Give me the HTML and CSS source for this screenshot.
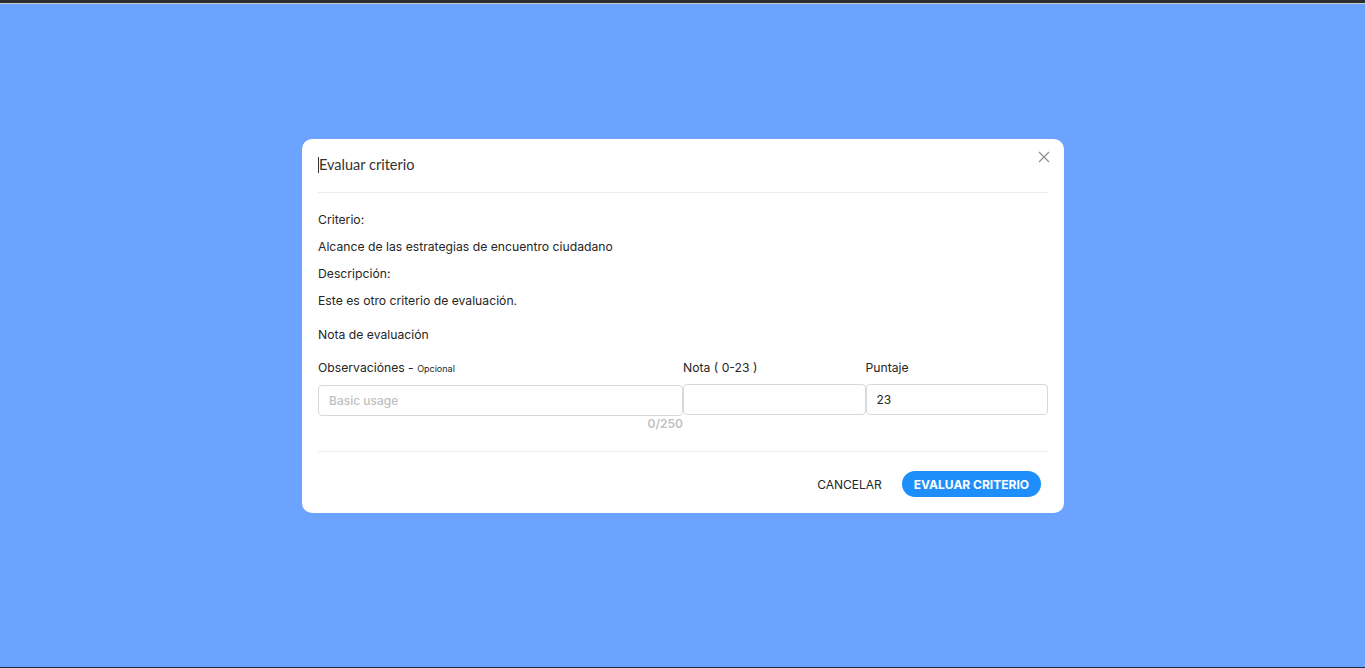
FILE: index.html
```html
<!DOCTYPE html>
<html lang="es">
<head>
<meta charset="utf-8">
<title>Evaluar criterio</title>
<link rel="stylesheet" href="styles.css">
</head>
<body>
<div class="topbar"></div>
<main class="stage">
  <section class="modal">
    <header class="modal-header">
      <h2 class="modal-title">Evaluar criterio</h2>
      <button class="close" aria-label="Cerrar">
        <svg width="12" height="12" viewBox="0 0 12 12"><path d="M1 1L11 11M11 1L1 11" stroke="#8c8c8c" stroke-width="1.2" fill="none"/></svg>
      </button>
    </header>
    <div class="modal-body">
      <p class="line">Criterio:</p>
      <p class="line">Alcance de las estrategias de encuentro ciudadano</p>
      <p class="line">Descripción:</p>
      <p class="line">Este es otro criterio de evaluación.</p>
      <p class="line section">Nota de evaluación</p>
      <div class="fields">
        <div class="field">
          <label class="label">Observaciónes - <small>Opcional</small></label>
          <input class="input" placeholder="Basic usage">
          <span class="count">0/250</span>
        </div>
        <div class="field">
          <label class="label">Nota ( 0-23 )</label>
          <input class="input">
        </div>
        <div class="field">
          <label class="label">Puntaje</label>
          <input class="input" value="23">
        </div>
      </div>
    </div>
    <footer class="modal-footer">
      <button class="btn btn-text">CANCELAR</button>
      <button class="btn btn-primary">EVALUAR CRITERIO</button>
    </footer>
  </section>
</main>
<div class="bottombar"></div>
</body>
</html>
```
FILE: styles.css
```css
* { box-sizing: border-box; }
html, body { margin: 0; height: 100%; }
body {
  background: #6ca3fe;
  font-family: Inter, "Noto Sans", sans-serif;
  color: #262626;
  display: flex;
  flex-direction: column;
  overflow: hidden;
}
.topbar {
  height: 4px;
  background: #2d2d2d;
  border-bottom: 1px solid #c9cbd0;
  flex: none;
}
.bottombar {
  height: 1px;
  background: #1f2b45;
  flex: none;
}
.stage {
  flex: 1;
  display: flex;
  justify-content: center;
  align-items: flex-start;
  padding-top: 135px;
  padding-left: 1px;
}
.modal {
  width: 762px;
  background: #fff;
  border-radius: 10px;
  padding: 0 16px;
}
.modal-header {
  height: 54px;
  display: flex;
  align-items: center;
  justify-content: space-between;
  border-bottom: 1px solid #ececec;
  padding-bottom: 2px;
}
.modal-title {
  margin: 0;
  font-family: Lato, sans-serif;
  font-weight: 400;
  font-size: 14.5px;
  color: #333;
  border-left: 1px solid #333;
  line-height: 16px;
}
.close {
  border: 0;
  background: none;
  padding: 0;
  margin: 0 -2px 0 0;
  align-self: flex-start;
  margin-top: 12px;
  width: 12px;
  height: 12px;
  display: flex;
}
.modal-body {
  padding-top: 18px;
  padding-bottom: 35px;
  border-bottom: 1px solid #ececec;
}
.line {
  margin: 0 0 9px;
  font-size: 12.2px;
  line-height: 18px;
  color: #262626;
}
.line.section { margin-top: 16px; margin-bottom: 16px; }
.fields {
  display: grid;
  grid-template-columns: minmax(0, 2fr) minmax(0, 1fr) minmax(0, 1fr);
}
.field { position: relative; display: flex; flex-direction: column; min-width: 0; }
.label {
  font-size: 12.2px;
  line-height: 16px;
  margin-bottom: 8px;
  color: #262626;
}
.label small { font-size: 9px; }
.input {
  width: 100%;
  height: 31px;
  border: 1px solid #d9d9d9;
  border-radius: 4px;
  padding: 0 10px;
  font: 12px Inter, sans-serif;
  color: #262626;
  outline: none;
}
.input::placeholder { color: #bfbfbf; font-weight: 500; }
.count {
  position: absolute;
  right: 0;
  top: 56px;
  font-size: 12px;
  font-weight: 600;
  color: #bfbfbf;
}
.modal-footer {
  display: flex;
  justify-content: flex-end;
  align-items: center;
  gap: 20px;
  padding: 19px 7px 16px 0;
}
.btn {
  border: 0;
  font-family: Inter, sans-serif;
  font-size: 12px;
  cursor: pointer;
  height: 26px;
  border-radius: 13px;
}
.btn-text { background: #fff; color: #262626; padding: 0; }
.btn-primary {
  background: #1e8ffa;
  color: #fff;
  font-weight: 700;
  padding: 0 12px;
}
```
